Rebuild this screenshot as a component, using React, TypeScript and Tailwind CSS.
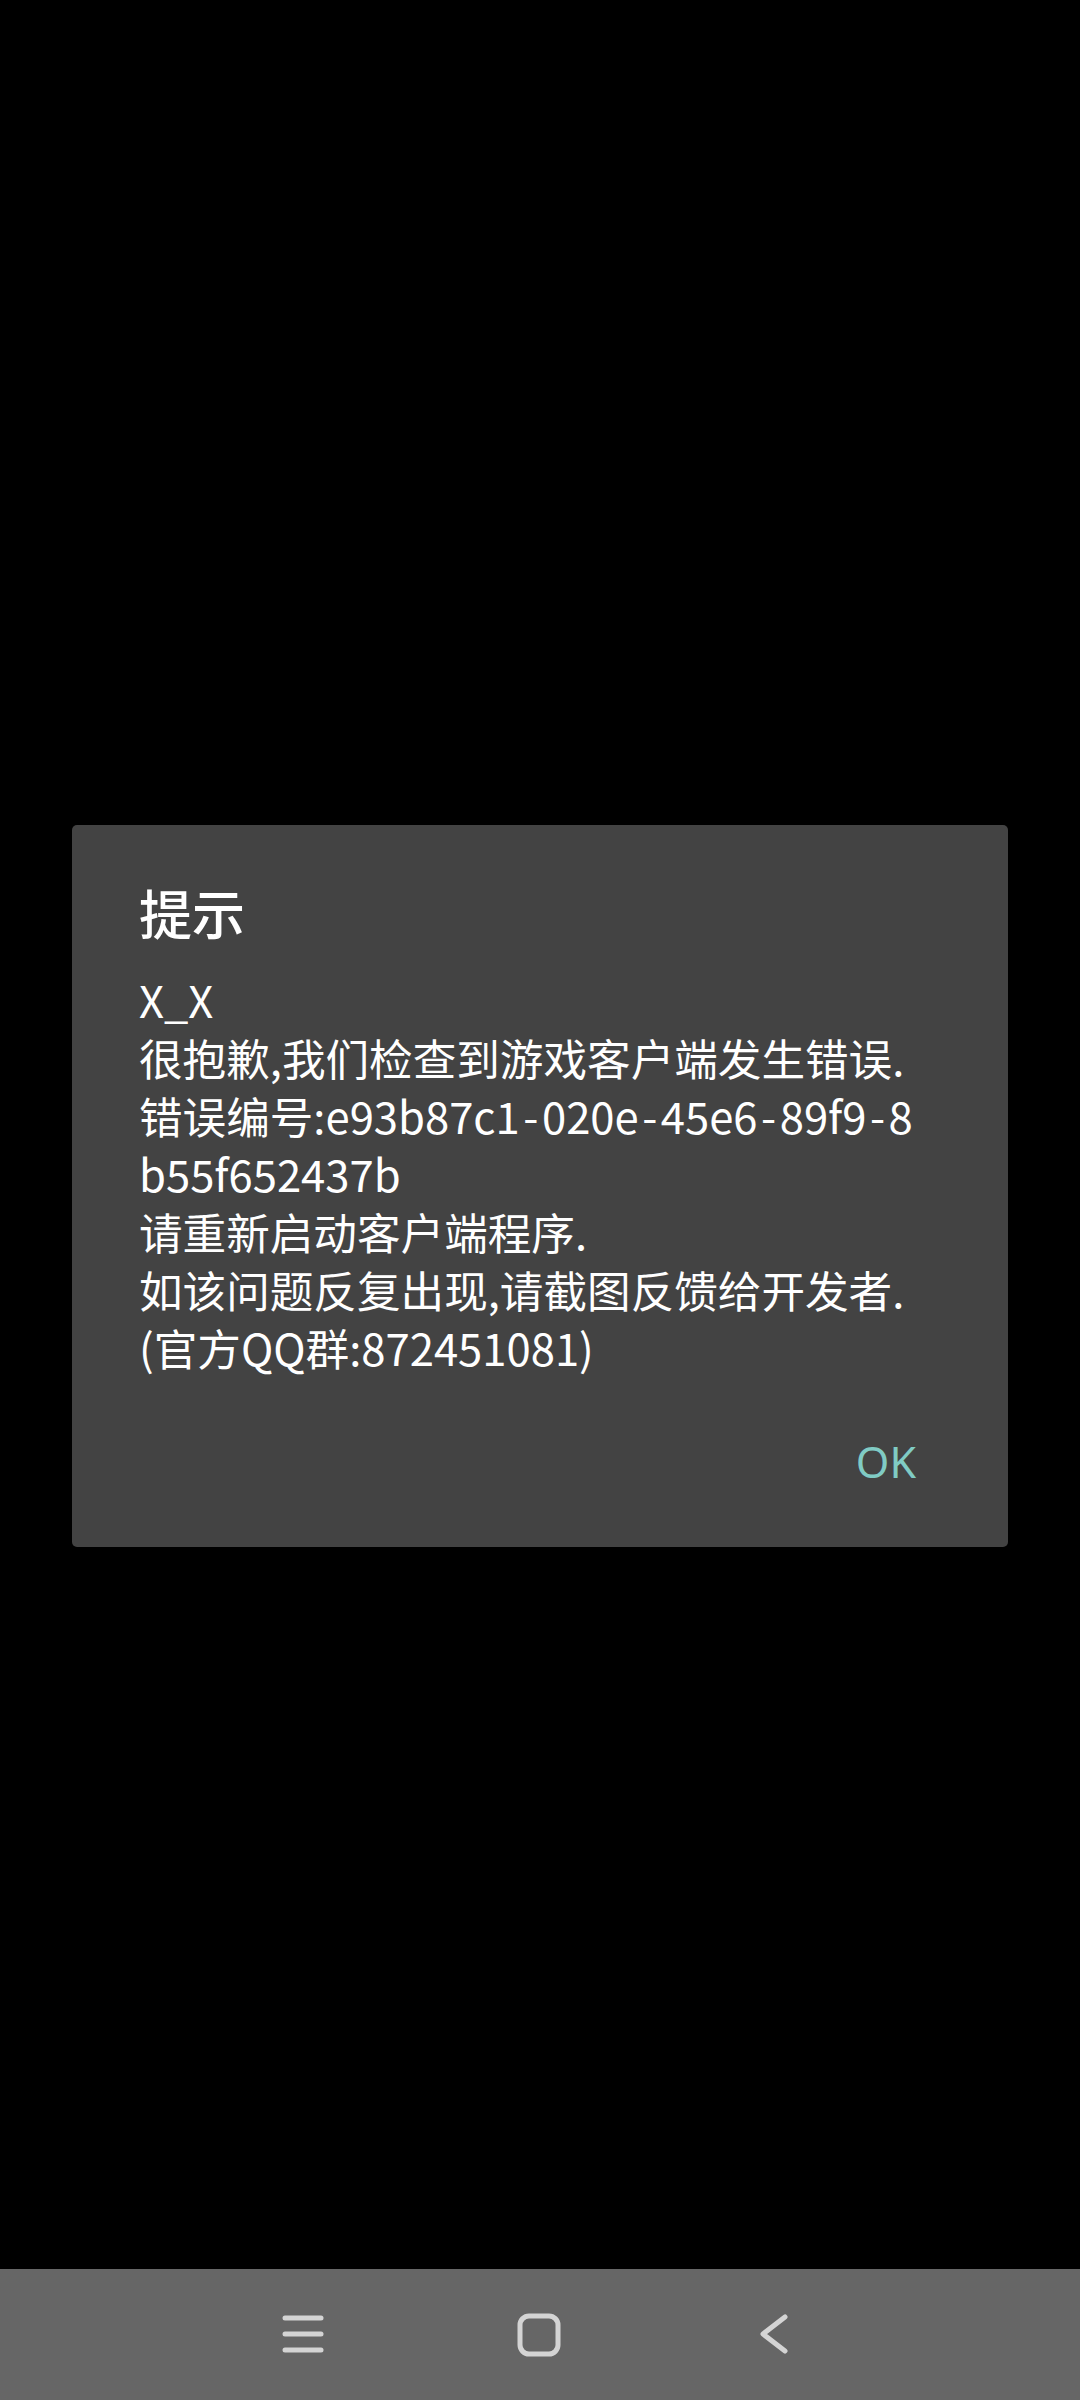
import React from "react";

const H = () => <span className="px-[3.5px]">-</span>;

export default function App() {
  return (
    <div
      className="flex h-[2400px] w-[1080px] flex-col bg-black"
      style={{ fontFamily: '"Noto Sans CJK SC", "Noto Sans", sans-serif' }}
    >
      <div className="flex-1 pt-[825px]">
        <div className="mx-[72px] rounded-[5px] bg-[#434343]">
          <div className="px-[67px] pt-[55px]">
            <div className="text-[53px] font-medium leading-[64px] text-white">提示</div>
            <div className="mt-[26px] text-[43.6px] leading-[58px] text-white">
              <div className="whitespace-nowrap">X_X</div>
              <div className="whitespace-nowrap">很抱歉,我们检查到游戏客户端发生错误.</div>
              <div className="whitespace-nowrap">
                错误编号:e93b87c1<H />020e<H />45e6<H />89f9<H />8
              </div>
              <div className="whitespace-nowrap">b55f652437b</div>
              <div className="whitespace-nowrap">请重新启动客户端程序.</div>
              <div className="whitespace-nowrap">如该问题反复出现,请截图反馈给开发者.</div>
              <div className="whitespace-nowrap">(官方QQ群:872451081)</div>
            </div>
          </div>
          <div className="flex justify-end pb-[56px] pr-[92px] pt-[57px]">
            <div
              className="text-[43px] leading-[58px] text-[#80cbc4]"
              style={{ fontFamily: '"Noto Sans", sans-serif' }}
            >
              OK
            </div>
          </div>
        </div>
      </div>
      <div className="relative flex h-[131px] items-center bg-[#666666]">
        <svg className="absolute left-[280px] top-[44px]" width="46" height="44" viewBox="0 0 46 44">
          <g stroke="#d4d4d4" strokeWidth="5" strokeLinecap="round">
            <line x1="5" y1="5" x2="41" y2="5" />
            <line x1="5" y1="21" x2="41" y2="21" />
            <line x1="5" y1="37" x2="41" y2="37" />
          </g>
        </svg>
        <svg className="absolute left-[517px] top-[44px]" width="46" height="46" viewBox="0 0 46 46">
          <rect x="3" y="3" width="38" height="38" rx="9" fill="none" stroke="#d4d4d4" strokeWidth="5" />
        </svg>
        <svg className="absolute left-[756px] top-[44px]" width="36" height="46" viewBox="0 0 36 46">
          <polyline
            points="29,4 7,21 29,38"
            fill="none"
            stroke="#d4d4d4"
            strokeWidth="5"
            strokeLinecap="round"
            strokeLinejoin="round"
          />
        </svg>
      </div>
    </div>
  );
}
